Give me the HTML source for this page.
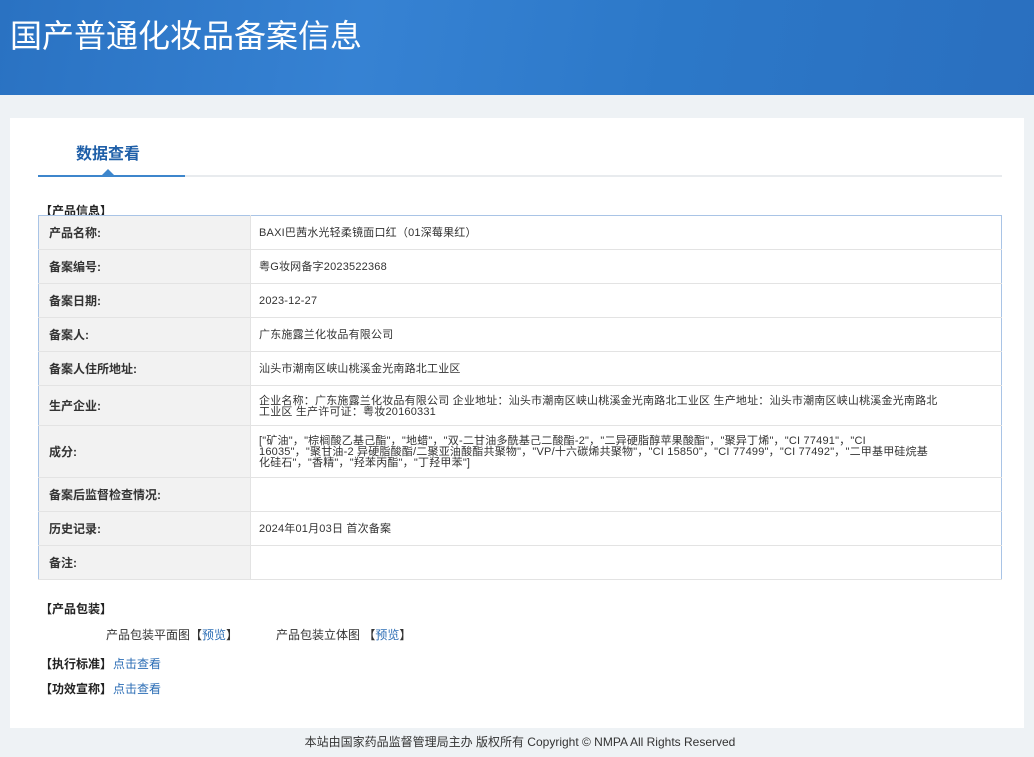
<!DOCTYPE html>
<html><head><meta charset="utf-8"><style>
body{margin:0;width:1034px;height:757px;background:#eef2f5;font-family:"Liberation Sans","Noto Sans CJK SC",sans-serif;font-size:12px;color:#333;position:relative;overflow:hidden}
.hd{position:absolute;left:0;top:0;width:1034px;height:95px;background:linear-gradient(100deg,#2a72c2 0%,#3682d3 35%,#2c78c8 65%,#2a6fbf 100%);overflow:hidden}
.hd h1{position:absolute;left:10px;top:11px;margin:0;font-size:32px;font-weight:normal;color:#fff;font-family:"Noto Sans CJK SC",sans-serif}
.card{position:absolute;left:10px;top:118px;width:1014px;height:610px;background:#fff}
.tab{position:absolute;left:76px;top:140px;font-size:16px;color:#1f5fa8;font-weight:bold}
.line{position:absolute;left:38px;top:175px;width:964px;height:2px;background:#e8ebee}
.line2{position:absolute;left:38px;top:175px;width:147px;height:2px;background:#3d86cc}
.tri{position:absolute;left:102px;top:169px;width:0;height:0;border-left:6px solid transparent;border-right:6px solid transparent;border-bottom:6px solid #3d86cc}
.sec{position:absolute;font-weight:bold;color:#222;font-size:12px}
table{position:absolute;left:38px;top:215px;width:964px;border-collapse:collapse;border:1px solid #a9c4e6;table-layout:fixed}
td{border-bottom:1px solid #e3e3e3;padding:2px 50px 0 8px;font-size:11px;line-height:11px;vertical-align:middle;letter-spacing:0.2px}
td.l{background:#f2f2f2;font-weight:bold;font-size:12px;padding:2px 0 0 10px;border-right:1px solid #e3e3e3;letter-spacing:0}
a{color:#2b6db5;text-decoration:none}
.ft{position:absolute;top:733px;left:0;width:1040px;text-align:center;font-size:12px;color:#333}
</style></head><body>
<div class="hd"><h1>国产普通化妆品备案信息</h1></div>
<div class="card"></div>
<div class="tab">数据查看</div>
<div class="line"></div><div class="line2"></div><div class="tri"></div>
<div class="sec" style="left:40px;top:202px">【产品信息】</div>
<table>
<colgroup><col style="width:212px"><col></colgroup>
<tr style="height:34px"><td class="l">产品名称:</td><td>BAXI巴茜水光轻柔镜面口红（01深莓果红）</td></tr>
<tr style="height:34px"><td class="l">备案编号:</td><td>粤G妆网备字2023522368</td></tr>
<tr style="height:34px"><td class="l">备案日期:</td><td>2023-12-27</td></tr>
<tr style="height:34px"><td class="l">备案人:</td><td>广东施露兰化妆品有限公司</td></tr>
<tr style="height:34px"><td class="l">备案人住所地址:</td><td>汕头市潮南区峡山桃溪金光南路北工业区</td></tr>
<tr style="height:40px"><td class="l">生产企业:</td><td>企业名称：广东施露兰化妆品有限公司 企业地址：汕头市潮南区峡山桃溪金光南路北工业区 生产地址：汕头市潮南区峡山桃溪金光南路北<br>工业区 生产许可证：粤妆20160331</td></tr>
<tr style="height:52px"><td class="l">成分:</td><td>["矿油"，"棕榈酸乙基己酯"，"地蜡"，"双-二甘油多酰基己二酸酯-2"，"二异硬脂醇苹果酸酯"，"聚异丁烯"，"CI 77491"，"CI<br>16035"，"聚甘油-2 异硬脂酸酯/二聚亚油酸酯共聚物"，"VP/十六碳烯共聚物"，"CI 15850"，"CI 77499"，"CI 77492"，"二甲基甲硅烷基<br>化硅石"，"香精"，"羟苯丙酯"，"丁羟甲苯"]</td></tr>
<tr style="height:34px"><td class="l">备案后监督检查情况:</td><td></td></tr>
<tr style="height:34px"><td class="l">历史记录:</td><td>2024年01月03日 首次备案</td></tr>
<tr style="height:34px"><td class="l">备注:</td><td></td></tr>
</table>
<div class="sec" style="left:40px;top:600px">【产品包装】</div>
<div style="position:absolute;left:106px;top:626px">产品包装平面图【<a>预览</a>】</div>
<div style="position:absolute;left:276px;top:626px">产品包装立体图 【<a>预览</a>】</div>
<div class="sec" style="left:40px;top:655px">【执行标准】</div><a style="position:absolute;left:113px;top:655px">点击查看</a>
<div class="sec" style="left:40px;top:680px">【功效宣称】</div><a style="position:absolute;left:113px;top:680px">点击查看</a>
<div class="ft">本站由国家药品监督管理局主办 版权所有 Copyright © NMPA All Rights Reserved</div>
</body></html>
